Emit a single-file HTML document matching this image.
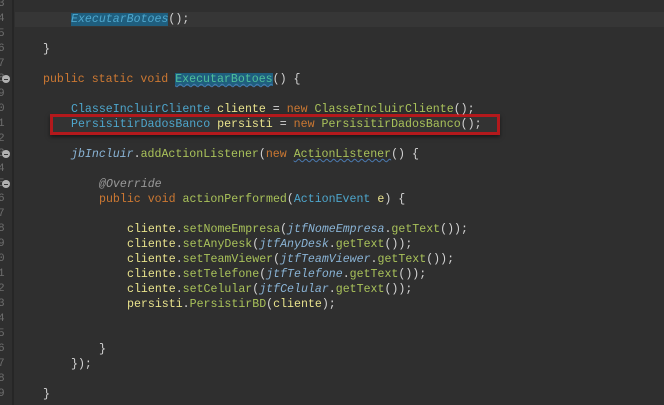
<!DOCTYPE html>
<html><head><style>
body{margin:0;width:664px;height:405px;background:#2f2f2f;overflow:hidden;position:relative;font-family:"Liberation Mono",monospace;font-size:11.6px;}
.g{position:absolute;left:12px;top:0;width:2px;height:405px;background:#262626;}
.cur{position:absolute;left:15px;top:12px;width:649px;height:15px;background:#363636;}
.n{position:absolute;left:-2px;color:#6e6e6e;line-height:15px;font-size:11px;}
.l{position:absolute;line-height:15px;white-space:pre;color:#d4d4d4;}
.k{color:#cc7832}.t{color:#4ea6cc}.m{color:#a9c25a}.v{color:#e8e28c}.i{font-style:italic;color:#8ab4d6}.a{color:#9a9a9a;font-style:italic}
.h{background:#1f5e7e;color:#4ea6cc;font-style:italic}
.u{text-decoration:underline wavy #4a7ab0;text-decoration-thickness:1px}
.f{position:absolute;left:2px;width:8px;height:8px;border-radius:50%;background:#b0b0b0;}
.f:after{content:"";position:absolute;left:2px;top:3.5px;width:4px;height:1px;background:#333;}
.box{position:absolute;left:50px;top:114px;width:444px;height:15px;border:3px solid #b3191c;background:#333;box-shadow:0 2px 4px rgba(0,0,0,.5);}
</style></head><body>
<div class="g"></div>
<div class="cur"></div>
<div class="box"></div>
<div class="n" style="top:-3px">3</div><div class="n" style="top:12px">4</div><div class="n" style="top:27px">5</div><div class="n" style="top:42px">6</div><div class="n" style="top:57px">7</div><div class="n" style="top:72px">8</div><div class="n" style="top:87px">9</div><div class="n" style="top:102px">0</div><div class="n" style="top:117px">1</div><div class="n" style="top:132px">2</div><div class="n" style="top:147px">3</div><div class="n" style="top:162px">4</div><div class="n" style="top:177px">5</div><div class="n" style="top:192px">6</div><div class="n" style="top:207px">7</div><div class="n" style="top:222px">8</div><div class="n" style="top:237px">9</div><div class="n" style="top:252px">0</div><div class="n" style="top:267px">1</div><div class="n" style="top:282px">2</div><div class="n" style="top:297px">3</div><div class="n" style="top:312px">4</div><div class="n" style="top:327px">5</div><div class="n" style="top:342px">6</div><div class="n" style="top:357px">7</div><div class="n" style="top:372px">8</div><div class="n" style="top:387px">9</div>
<div class="f" style="top:75px"></div><div class="f" style="top:150px"></div><div class="f" style="top:180px"></div>
<div class="l" style="top:12px;left:71px"><span class="h">ExecutarBotoes</span>();</div>
<div class="l" style="top:42px;left:43px">}</div>
<div class="l" style="top:72px;left:43px"><span class="k">public static void </span><span class="h u" style="font-style:normal;color:#4fbf9a">ExecutarBotoes</span>() {</div>
<div class="l" style="top:102px;left:71px"><span class="t">ClasseIncluirCliente </span><span class="v">cliente</span> = <span class="k">new </span><span class="m">ClasseIncluirCliente</span>();</div>
<div class="l" style="top:117px;left:71px"><span class="t">PersisitirDadosBanco </span><span class="v">persisti</span> = <span class="k">new </span><span class="m">PersisitirDadosBanco</span>();</div>
<div class="l" style="top:147px;left:71px"><span class="i">jbIncluir</span>.<span class="m">addActionListener</span>(<span class="k">new </span><span class="m u">ActionListener</span>() {</div>
<div class="l" style="top:177px;left:99px"><span class="a">@Override</span></div>
<div class="l" style="top:192px;left:99px"><span class="k">public void </span><span class="m">actionPerformed</span>(<span class="t">ActionEvent </span><span class="v">e</span>) {</div>
<div class="l" style="top:222px;left:127px"><span class="v">cliente</span>.<span class="m">setNomeEmpresa</span>(<span class="i">jtfNomeEmpresa</span>.<span class="m">getText</span>());</div>
<div class="l" style="top:237px;left:127px"><span class="v">cliente</span>.<span class="m">setAnyDesk</span>(<span class="i">jtfAnyDesk</span>.<span class="m">getText</span>());</div>
<div class="l" style="top:252px;left:127px"><span class="v">cliente</span>.<span class="m">setTeamViewer</span>(<span class="i">jtfTeamViewer</span>.<span class="m">getText</span>());</div>
<div class="l" style="top:267px;left:127px"><span class="v">cliente</span>.<span class="m">setTelefone</span>(<span class="i">jtfTelefone</span>.<span class="m">getText</span>());</div>
<div class="l" style="top:282px;left:127px"><span class="v">cliente</span>.<span class="m">setCelular</span>(<span class="i">jtfCelular</span>.<span class="m">getText</span>());</div>
<div class="l" style="top:297px;left:127px"><span class="v">persisti</span>.<span class="m">PersistirBD</span>(<span class="v">cliente</span>);</div>
<div class="l" style="top:342px;left:99px">}</div>
<div class="l" style="top:357px;left:71px">});</div>
<div class="l" style="top:387px;left:43px">}</div>
</body></html>
